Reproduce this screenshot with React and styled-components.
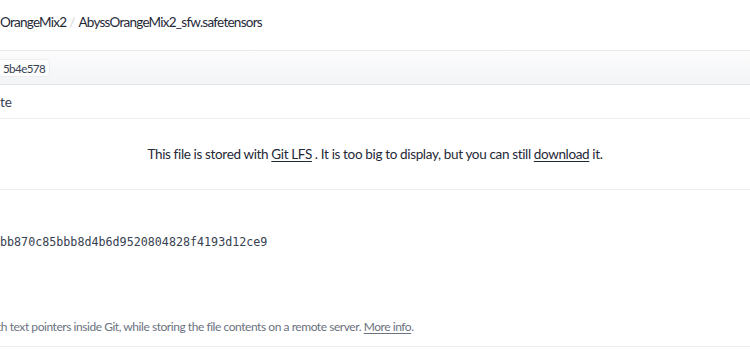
import React from "react";
import styled, { createGlobalStyle } from "styled-components";

const Global = createGlobalStyle`
  html, body {
    margin: 0;
    padding: 0;
    background: #fff;
    overflow: hidden;
  }
  body {
    font-family: "Lato", "Noto Sans", sans-serif;
    color: #1f2937;
  }
`;

const Page = styled.div`
  width: 750px;
  height: 350px;
  overflow: hidden;
`;

const Breadcrumb = styled.div`
  height: 50px;
  display: flex;
  align-items: center;
  gap: 3px;
  padding-bottom: 6px;
  box-sizing: border-box;
  font-size: 13.5px;
  letter-spacing: -0.75px;
  color: #1f2937;
  white-space: nowrap;
`;

const Slash = styled.span`
  color: #d1d5db;
  letter-spacing: 0;
`;

const FileBox = styled.div`
  border-top: 1px solid #e8eaed;
`;

const Header = styled.div`
  height: 33px;
  display: flex;
  align-items: center;
  background: linear-gradient(to bottom, #fcfcfd, #f3f4f6);
  border-bottom: 1px solid #e5e7eb;
`;

const Commit = styled.span`
  margin-left: -6px;
  padding: 1px 4px 1px 8px;
  height: 18px;
  line-height: 16px;
  box-sizing: border-box;
  font-size: 11.6px;
  letter-spacing: -0.6px;
  color: #374151;
  background: #fdfdfd;
  border: 1px solid #eceef1;
  border-radius: 4px;
`;

const Row = styled.div`
  height: 33px;
  display: flex;
  align-items: center;
  font-size: 13.5px;
  color: #374151;
  border-bottom: 1px solid #eef0f2;
`;

const Notice = styled.div`
  height: 71px;
  display: flex;
  align-items: center;
  justify-content: center;
  font-size: 13.5px;
  letter-spacing: -0.35px;
  color: #1f2937;
  border-bottom: 1px solid #eef0f2;
  padding-bottom: 1px;
  box-sizing: border-box;
`;

const Link = styled.a`
  color: inherit;
  text-decoration: underline;
  text-underline-offset: 2px;
  margin: 0 ${(p) => (p.$tight ? 0 : 3)}px;
`;

const Details = styled.div`
  height: 157px;
  display: flex;
  flex-direction: column;
  border-bottom: 1px solid #eef0f2;
  box-sizing: border-box;
`;

const Hash = styled.div`
  margin-top: 45px;
  font-family: "DejaVu Sans Mono", "Liberation Mono", monospace;
  font-size: 11.7px;
  color: #374151;
`;

const Footnote = styled.div`
  margin-top: auto;
  margin-bottom: 12px;
  margin-left: -3px;
  font-size: 12px;
  letter-spacing: -0.45px;
  color: #6b7280;
  white-space: nowrap;
`;

export default function App() {
  return (
    <Page>
      <Global />
      <Breadcrumb>
        <span>OrangeMix2</span>
        <Slash>/</Slash>
        <span>AbyssOrangeMix2_sfw.safetensors</span>
      </Breadcrumb>
      <FileBox>
        <Header>
          <Commit>5b4e578</Commit>
        </Header>
        <Row>te</Row>
        <Notice>
          This file is stored with<Link>Git LFS</Link>. It is too big to
          display, but you can still<Link>download</Link>it.
        </Notice>
        <Details>
          <Hash>bb870c85bbb8d4b6d9520804828f4193d12ce9</Hash>
          <Footnote>
            th text pointers inside Git, while storing the file contents on a
            remote server. <Link $tight>More info</Link>.
          </Footnote>
        </Details>
      </FileBox>
    </Page>
  );
}
